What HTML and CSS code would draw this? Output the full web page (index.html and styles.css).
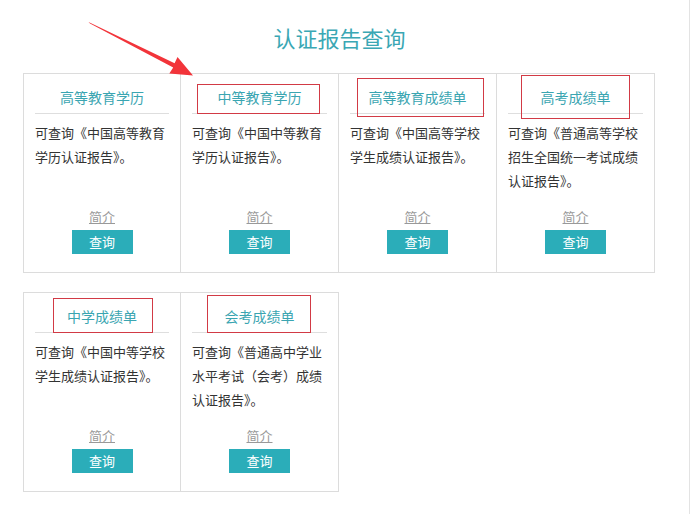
FILE: index.html
```html
<!DOCTYPE html>
<html>
<head>
<meta charset="utf-8">
<title>认证报告查询</title>
<link rel="stylesheet" href="styles.css">
</head>
<body>
<div class="page">
  <h1 class="page-title">认证报告查询</h1>

  <div class="report-row">
    <div class="report">
      <div class="report-name">高等教育学历</div>
      <div class="report-desc">可查询《中国高等教育学历认证报告》。</div>
      <a class="report-intro" href="#">简介</a>
      <a class="report-btn" href="#">查询</a>
    </div>
    <div class="report">
      <span class="mark mark-a"></span>
      <div class="report-name">中等教育学历</div>
      <div class="report-desc">可查询《中国中等教育学历认证报告》。</div>
      <a class="report-intro" href="#">简介</a>
      <a class="report-btn" href="#">查询</a>
    </div>
    <div class="report">
      <span class="mark mark-b"></span>
      <div class="report-name">高等教育成绩单</div>
      <div class="report-desc">可查询《中国高等学校学生成绩认证报告》。</div>
      <a class="report-intro" href="#">简介</a>
      <a class="report-btn" href="#">查询</a>
    </div>
    <div class="report">
      <span class="mark mark-c"></span>
      <div class="report-name">高考成绩单</div>
      <div class="report-desc">可查询《普通高等学校招生全国统一考试成绩认证报告》。</div>
      <a class="report-intro" href="#">简介</a>
      <a class="report-btn" href="#">查询</a>
    </div>
  </div>

  <div class="report-row">
    <div class="report">
      <span class="mark mark-d"></span>
      <div class="report-name">中学成绩单</div>
      <div class="report-desc">可查询《中国中等学校学生成绩认证报告》。</div>
      <a class="report-intro" href="#">简介</a>
      <a class="report-btn" href="#">查询</a>
    </div>
    <div class="report">
      <span class="mark mark-e"></span>
      <div class="report-name">会考成绩单</div>
      <div class="report-desc">可查询《普通高中学业水平考试（会考）成绩认证报告》。</div>
      <a class="report-intro" href="#">简介</a>
      <a class="report-btn" href="#">查询</a>
    </div>
  </div>

  <svg class="arrow" width="200" height="90" viewBox="0 0 200 90">
    <polygon fill="#f2343a" points="88.5,22 90,23.6 173.2,67.6 169.3,73.4 193,75.5 177.5,57 174.6,63.2"/>
  </svg>
</div>
</body>
</html>
```

FILE: styles.css
```css
html, body { margin: 0; padding: 0; background: #fff; }
body { font-family: "Microsoft YaHei", "Noto Sans CJK SC", sans-serif; color: #333; font-size: 13px; }

.page {
  position: relative;
  width: 690px; height: 514px;
  border-right: 1px solid #e3e3e3;
  box-sizing: border-box;
}
.page-title {
  margin: 0; padding: 22px 10px 0 0;
  font-size: 22px; font-weight: normal; line-height: 30px;
  color: #3aa7b4; text-align: center;
}

.report-row { display: flex; margin-left: 23px; margin-top: 21px; }
.report-row + .report-row { margin-top: 19px; }

.report {
  position: relative;
  display: flex; flex-direction: column; align-items: center;
  width: 158px; height: 200px; box-sizing: border-box;
  border: 1px solid #dcdcdc;
  padding: 0 11px 18px;
}
.report + .report { margin-left: -1px; width: 159px; }

.report-name {
  align-self: stretch;
  padding: 10px 0 3px; line-height: 26px;
  font-size: 14px; color: #3aa5b1; text-align: center;
  border-bottom: 1px solid #dedede;
}
.report-desc {
  align-self: stretch; flex: 1;
  padding-top: 7px; line-height: 24px;
}
.report-intro {
  line-height: 20px; color: #999; text-decoration: underline;
  margin-bottom: 3px;
}
.report-btn {
  width: 61px; height: 24px; line-height: 24px;
  background: #2badb9; color: #fff; text-align: center;
  text-decoration: none;
}

.mark { position: absolute; border: 1px solid #d23a45; box-sizing: border-box; }
.mark-a { left: 16px; top: 10px; width: 123px; height: 30px; }
.mark-b { left: 18px; top: 4px; width: 127px; height: 39px; }
.mark-c { left: 24px; top: 1px; width: 109px; height: 44px; }
.mark-d { left: 29px; top: 5px; width: 100px; height: 35px; }
.mark-e { left: 26px; top: 2px; width: 104px; height: 38px; }

.arrow { position: absolute; left: 0; top: 0; }
```
